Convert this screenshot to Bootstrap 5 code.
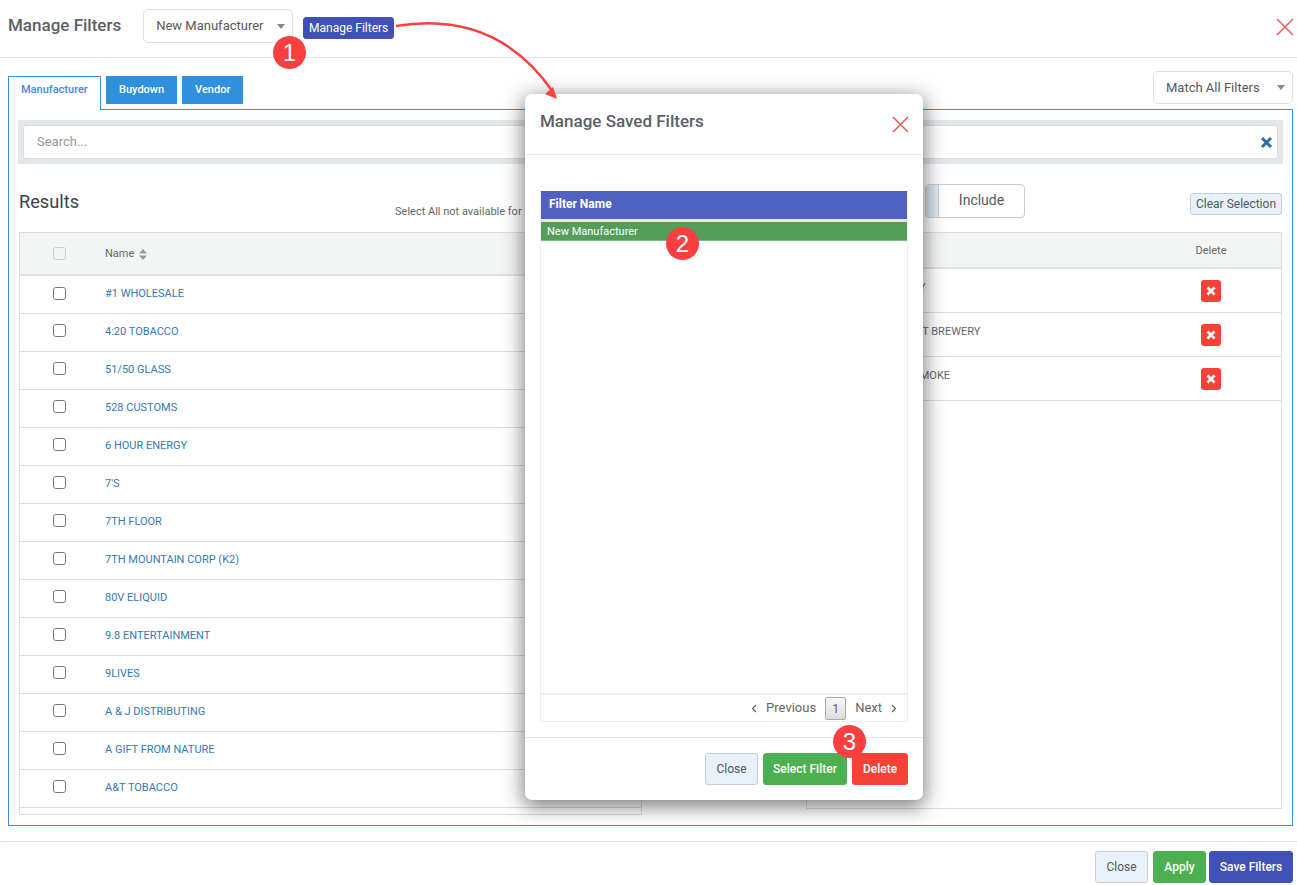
<!DOCTYPE html>
<html lang="en">
<head>
<meta charset="utf-8">
<title>Manage Filters</title>
<link rel="stylesheet" href="https://cdn.jsdelivr.net/npm/bootstrap@5.3.0/dist/css/bootstrap.min.css">
<style>
html,body{height:885px;overflow:hidden;background:#fff}
body{font-family:Roboto,"Liberation Sans",sans-serif;color:#54585d;font-size:13px;position:relative}
.top-bar{height:58px;border-bottom:1px solid #e4e4e4;padding:9px 3px 0 8px}
.page-title{font-size:17px;font-weight:500;margin:6px 22px 0 0;line-height:20px;color:#5b6066;white-space:nowrap}
.caret-select{font-size:13px;color:#54585d;border:1px solid #ddd;border-radius:5px;height:34px;padding:0 24px 0 12px;box-shadow:none;
 background-image:url("data:image/svg+xml,%3Csvg xmlns='http://www.w3.org/2000/svg' width='8' height='5'%3E%3Cpath d='M0 0h8L4 5z' fill='%23888'/%3E%3C/svg%3E");background-size:8px 5px;background-position:right 7px top 14px}
.filter-select{width:150px}
.match-select{width:140px;height:33px;margin-bottom:5px;background-position:right 7px top 13px}
.mini-btn{--bs-btn-padding-y:0;--bs-btn-padding-x:0;--bs-btn-font-size:12px;--bs-btn-border-radius:3px;height:22px;line-height:20px;white-space:nowrap}
.indigo-btn{background:#3f51b5;border-color:#3f51b5;color:#fff}
.manage-btn{margin:8px 0 0 10px;width:91px}
.close-x{margin:9px 0 0 auto;display:block;line-height:0}
.tabs-row{height:51px;padding:0 4px 0 8px}
.tab-list{gap:5px;height:34px;margin-top:18px;margin-bottom:-1px;position:relative;z-index:1;border:0}
.tab-item{font-size:11px;font-weight:500;height:28px;line-height:28px;padding:0 13px;background:#3090e0;color:#fff;text-decoration:none}
.tab-item.is-on{height:34px;background:#fff;color:#3a8fe0;border:1px solid #3a8fe0;border-bottom:0;padding:0 12px;line-height:26px;margin-right:0;width:93px}
.panel{height:717px;margin:0 4px 0 8px;border:1px solid #3a8fe0;padding:10px 9px}
.search-band{height:44px;background:#e4e7ea;padding:5px}
.search-field{height:34px;background:#fff;border:1px solid #ddd;border-radius:3px;padding:0 4px 0 13px;font-size:13px;color:#999}
.columns{padding:0 1px;justify-content:space-between}
.col-left{width:623px}
.col-right{width:476px}
.col-head{height:68px}
.results-title{font-size:18.2px;font-weight:400;color:#3c4046;margin:0;line-height:22px;padding-top:27px}
.select-note{font-size:11px;color:#666;margin-left:316px;padding-top:41px;line-height:14px;white-space:nowrap}
.include-toggle{width:100px;height:34px;margin:20px 0 0 119px;border:1px solid #ccc;border-radius:4px;overflow:hidden;font-size:14px}
.toggle-knob{width:13px;background:linear-gradient(90deg,#d5e1ec,#e4edf5);border-right:1px solid #ccc}
.toggle-text{line-height:30px}
.clear-btn{margin:29px 0 0 auto;width:92px;background:#e8f1fa;border-color:#c5d0dc;color:#54585d}
.table-box{border:1px solid #ddd;overflow:hidden}
.box-left{height:583px}
.box-right{height:577px}
.grid-table{margin:0;font-size:11px}
.grid-table th{background:#f3f4f4;font-weight:400;color:#666;border-bottom:2px solid #e2e2e2;padding:0;vertical-align:middle}
.grid-table th.name-col{padding-top:2px}
.box-right th.del-col{padding-top:3px}
.grid-table td{padding:0;vertical-align:middle;border-bottom:1px solid #ddd;color:#666}
.box-left thead tr{height:42px}
.box-left tbody tr{height:38px}
.box-right thead tr{height:35px}
.box-right tbody tr{height:44px}
.check-col{width:78px;text-align:center}
.row-check{width:13px;height:13px;margin:0;border-color:#777;border-radius:2px;vertical-align:middle}
td .row-check{margin-top:-2px}
.row-check:disabled{opacity:1;background:#f3f4f4;border-color:#ccc}
.name-col{padding-left:7px!important}
.name-link{color:#337ab7;text-decoration:none}
.sort-mark{display:inline-block;margin-left:5px;vertical-align:0;line-height:0}
.box-right td.name-cell{padding:0 0 4px 9px}
.del-col{width:140px;text-align:center}
.box-right td.del-col{padding-top:2px}
.del-btn{display:inline-flex;align-items:center;justify-content:center;width:20px;height:22px;background:#f44336;border-radius:3px;border:0;padding:0;vertical-align:middle}
.page-foot{height:45px;margin-top:15px;border-top:1px solid #e4e4e4;padding:9px 4px 0 0;gap:5px;margin-left:1px}
.foot-btn{--bs-btn-font-size:12px;--bs-btn-padding-x:0;--bs-btn-padding-y:0;--bs-btn-border-radius:3px;height:32px;line-height:30px;font-weight:500}
.soft-btn{background:#e8f1fa;border-color:#c5d0dc;color:#54585d;font-weight:400;width:53px}
.green-btn{background:#4caf50;border-color:#4caf50;color:#fff}
.red-btn{background:#f44336;border-color:#f44336;color:#fff}
.dialog-wrap{position:absolute;left:525px;top:94px;width:398px;height:706px;z-index:10}
.dialog-box{height:100%;border:0;border-radius:7px;box-shadow:0 5px 20px 2px rgba(0,0,0,.5);overflow:hidden}
.dialog-head{height:61px;padding:0 15px;border-bottom:1px solid #e8e8e8;display:flex;justify-content:space-between}
.dialog-title{font-size:17px;font-weight:500;color:#5b6066;margin:17px 0 0;line-height:20px}
.dialog-x{margin:22px -1px 0 0;line-height:0}
.dialog-body{flex:1;padding:36px 15px 15px;display:flex;flex-direction:column}
.saved-box{flex:1;border:1px solid #eee;border-top:0;display:flex;flex-direction:column}
.saved-list{flex:1}
.saved-table{margin:0;font-size:11px}
.saved-table th{background:#5061c1;color:#fff;font-size:12px;font-weight:700;height:29px;padding:0 8px 2px;vertical-align:middle;border-bottom:1px solid #3f51b5}
.saved-table td{background:#539f5a;color:#fff;height:20px;padding:2px 6px 0;vertical-align:middle;border-top:3px solid #e6e6e6;border-bottom:1px solid #7cb883}
.saved-pager{height:28px;border-top:2px solid #eee;padding-right:10px;font-size:13px;color:#666;gap:9px}
.pager-num{width:21px;height:23px;line-height:21px;border:1px solid #aaa;border-radius:2px;background:linear-gradient(#f8f8f8,#ddd);text-align:center;margin-top:2px;align-self:flex-start}
.pager-label{display:inline-flex;align-items:center;gap:9px}
.dialog-foot{height:63px;padding:15px 15px 0;border-top:1px solid #e8e8e8;gap:5px}
.select-btn{width:84px}
.delete-btn{width:56px}
.apply-btn{width:53px}
.save-btn{width:84px;margin-left:-2px}
.step-dot{position:absolute;z-index:21;width:33px;height:33px;border-radius:50%;background:#f94040;color:#fff;font-size:24px;line-height:33px;text-align:center;font-family:"Liberation Sans",Arial,sans-serif}
.arrow-layer{position:absolute;left:0;top:0;z-index:20;pointer-events:none}
</style>
</head>
<body>
<header class="top-bar d-flex align-items-start">
  <h1 class="page-title">Manage Filters</h1>
  <select class="form-select caret-select filter-select"><option>New Manufacturer</option></select>
  <button type="button" class="btn mini-btn indigo-btn manage-btn">Manage Filters</button>
  <span class="close-x"><svg width="18" height="18" viewBox="0 0 18 18"><path d="M1 1l16 16M17 1L1 17" stroke="#e8605c" stroke-width="1.6" fill="none"/></svg></span>
</header>

<div class="tabs-row d-flex justify-content-between align-items-end">
  <nav class="nav tab-list align-items-start">
    <a class="tab-item is-on" href="#">Manufacturer</a>
    <a class="tab-item" href="#">Buydown</a>
    <a class="tab-item" href="#">Vendor</a>
  </nav>
  <select class="form-select caret-select match-select"><option>Match All Filters</option></select>
</div>

<section class="panel">
  <div class="search-band">
    <div class="search-field d-flex align-items-center justify-content-between">
      <span>Search...</span>
      <svg width="13" height="13" viewBox="0 0 13 13"><path d="M2 2l9 9M11 2l-9 9" stroke="#2e6da4" stroke-width="3" fill="none"/></svg>
    </div>
  </div>
  <div class="columns d-flex">
    <div class="col-left">
      <div class="col-head d-flex">
        <h2 class="results-title">Results</h2>
        <span class="select-note">Select All not available for</span>
      </div>
      <div class="table-box box-left">
        <table class="table grid-table">
          <thead><tr><th class="check-col"><input class="form-check-input row-check" type="checkbox" disabled></th>
            <th class="name-col">Name<span class="sort-mark"><svg width="8" height="11" viewBox="0 0 8 11"><path d="M4 0l4 4.5H0zM4 11l4-4.5H0z" fill="#999"/></svg></span></th></tr></thead>
          <tbody>
            <tr><td class="check-col"><input class="form-check-input row-check" type="checkbox"></td><td class="name-col"><a class="name-link" href="#">#1 WHOLESALE</a></td></tr>
            <tr><td class="check-col"><input class="form-check-input row-check" type="checkbox"></td><td class="name-col"><a class="name-link" href="#">4:20 TOBACCO</a></td></tr>
            <tr><td class="check-col"><input class="form-check-input row-check" type="checkbox"></td><td class="name-col"><a class="name-link" href="#">51/50 GLASS</a></td></tr>
            <tr><td class="check-col"><input class="form-check-input row-check" type="checkbox"></td><td class="name-col"><a class="name-link" href="#">528 CUSTOMS</a></td></tr>
            <tr><td class="check-col"><input class="form-check-input row-check" type="checkbox"></td><td class="name-col"><a class="name-link" href="#">6 HOUR ENERGY</a></td></tr>
            <tr><td class="check-col"><input class="form-check-input row-check" type="checkbox"></td><td class="name-col"><a class="name-link" href="#">7'S</a></td></tr>
            <tr><td class="check-col"><input class="form-check-input row-check" type="checkbox"></td><td class="name-col"><a class="name-link" href="#">7TH FLOOR</a></td></tr>
            <tr><td class="check-col"><input class="form-check-input row-check" type="checkbox"></td><td class="name-col"><a class="name-link" href="#">7TH MOUNTAIN CORP (K2)</a></td></tr>
            <tr><td class="check-col"><input class="form-check-input row-check" type="checkbox"></td><td class="name-col"><a class="name-link" href="#">80V ELIQUID</a></td></tr>
            <tr><td class="check-col"><input class="form-check-input row-check" type="checkbox"></td><td class="name-col"><a class="name-link" href="#">9.8 ENTERTAINMENT</a></td></tr>
            <tr><td class="check-col"><input class="form-check-input row-check" type="checkbox"></td><td class="name-col"><a class="name-link" href="#">9LIVES</a></td></tr>
            <tr><td class="check-col"><input class="form-check-input row-check" type="checkbox"></td><td class="name-col"><a class="name-link" href="#">A &amp; J DISTRIBUTING</a></td></tr>
            <tr><td class="check-col"><input class="form-check-input row-check" type="checkbox"></td><td class="name-col"><a class="name-link" href="#">A GIFT FROM NATURE</a></td></tr>
            <tr><td class="check-col"><input class="form-check-input row-check" type="checkbox"></td><td class="name-col"><a class="name-link" href="#">A&amp;T TOBACCO</a></td></tr>
          </tbody>
        </table>
      </div>
    </div>
    <div class="col-right">
      <div class="col-head d-flex align-items-start">
        <div class="include-toggle d-flex">
          <span class="toggle-knob"></span>
          <span class="flex-grow-1 text-center toggle-text">Include</span>
        </div>
        <button type="button" class="btn mini-btn clear-btn">Clear Selection</button>
      </div>
      <div class="table-box box-right">
        <table class="table grid-table">
          <thead><tr><th class="name-col">Name</th><th class="del-col">Delete</th></tr></thead>
          <tbody>
            <tr><td class="name-cell">AMERICAN COMPANY</td><td class="del-col"><button type="button" class="del-btn" aria-label="Delete"><svg width="10" height="10" viewBox="0 0 10 10"><path d="M1.5 1.5l7 7M8.5 1.5l-7 7" stroke="#fff" stroke-width="2.6" fill="none"/></svg></button></td></tr>
            <tr><td class="name-cell">ANGRY ISLAND CRAFT BREWERY</td><td class="del-col"><button type="button" class="del-btn" aria-label="Delete"><svg width="10" height="10" viewBox="0 0 10 10"><path d="M1.5 1.5l7 7M8.5 1.5l-7 7" stroke="#fff" stroke-width="2.6" fill="none"/></svg></button></td></tr>
            <tr><td class="name-cell">BACKWOOD CIGAR SMOKE</td><td class="del-col"><button type="button" class="del-btn" aria-label="Delete"><svg width="10" height="10" viewBox="0 0 10 10"><path d="M1.5 1.5l7 7M8.5 1.5l-7 7" stroke="#fff" stroke-width="2.6" fill="none"/></svg></button></td></tr>
          </tbody>
        </table>
      </div>
    </div>
  </div>
</section>

<footer class="page-foot d-flex justify-content-end">
  <button type="button" class="btn foot-btn soft-btn">Close</button>
  <button type="button" class="btn foot-btn green-btn apply-btn">Apply</button>
  <button type="button" class="btn foot-btn indigo-btn save-btn">Save Filters</button>
</footer>

<div class="dialog-wrap">
  <div class="modal-content dialog-box bg-white d-flex flex-column">
    <div class="dialog-head">
      <h2 class="dialog-title">Manage Saved Filters</h2>
      <span class="dialog-x"><svg width="17" height="17" viewBox="0 0 17 17"><path d="M1 1l15 15M16 1L1 16" stroke="#e8605c" stroke-width="1.6" fill="none"/></svg></span>
    </div>
    <div class="dialog-body">
      <div class="saved-box">
        <div class="saved-list">
          <table class="table saved-table">
            <thead><tr><th>Filter Name</th></tr></thead>
            <tbody><tr><td>New Manufacturer</td></tr></tbody>
          </table>
        </div>
        <div class="saved-pager d-flex justify-content-end align-items-center">
          <span class="pager-label"><svg width="6" height="9" viewBox="0 0 6 9"><path d="M5 1L1.5 4.5 5 8" stroke="#666" stroke-width="1.2" fill="none"/></svg>Previous</span>
          <span class="pager-num">1</span>
          <span class="pager-label">Next<svg width="6" height="9" viewBox="0 0 6 9"><path d="M1 1l3.5 3.5L1 8" stroke="#666" stroke-width="1.2" fill="none"/></svg></span>
        </div>
      </div>
    </div>
    <div class="dialog-foot d-flex justify-content-end align-items-start">
      <button type="button" class="btn foot-btn soft-btn">Close</button>
      <button type="button" class="btn foot-btn green-btn select-btn">Select Filter</button>
      <button type="button" class="btn foot-btn red-btn delete-btn">Delete</button>
    </div>
  </div>
</div>

<svg class="arrow-layer" width="1297" height="885" viewBox="0 0 1297 885">
  <path d="M396 26C470 14 520 44 553 92" stroke="#f94040" stroke-width="2.4" fill="none"/>
  <path d="M557 99l-12-5 8-7z" fill="#f94040"/>
</svg>
<span class="step-dot" style="left:273px;top:36px">1</span>
<span class="step-dot" style="left:666px;top:227px">2</span>
<span class="step-dot" style="left:833px;top:725px">3</span>
</body>
</html>
